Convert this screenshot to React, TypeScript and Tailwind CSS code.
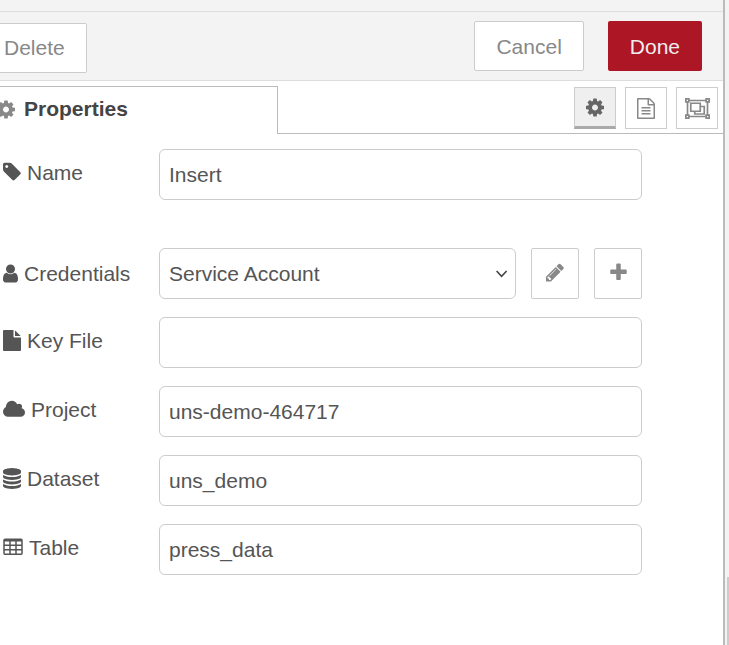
import type { ReactNode } from "react";

type IconProps = { className?: string };

const COG =
  "M1152 896q0-106-75-181t-181-75-181 75-75 181 75 181 181 75 181-75 75-181zm512-109v222q0 12-8 23t-20 13l-185 28q-19 54-39 91 35 50 107 138 10 12 10 25t-9 23q-27 37-99 108t-94 71q-12 0-26-9l-138-108q-44 23-91 38-16 136-29 186-7 28-36 28h-222q-14 0-24.5-8.5t-11.5-21.5l-28-184q-49-16-90-37l-141 107q-10 9-25 9-14 0-25-11-126-114-165-168-7-10-7-23 0-12 8-23 15-21 51-66.5t54-70.5q-27-50-41-99l-183-27q-13-2-21-12.5t-8-23.5v-222q0-12 8-23t19-13l186-28q14-46 39-92-40-57-107-138-10-12-10-24 0-10 9-23 26-36 98.5-107.5t94.5-71.5q13 0 26 10l138 107q44-23 91-38 16-136 29-186 7-28 36-28h222q14 0 24.5 8.5t11.5 21.5l28 184q49 16 90 37l142-107q9-9 24-9 13 0 25 10 129 119 165 170 7 8 7 22 0 12-8 23-15 21-51 66.5t-54 70.5q26 50 41 98l183 28q13 2 21 12.5t8 23.5z";
const TAG =
  "M576 448q0-53-37.5-90.5t-90.5-37.5-90.5 37.5-37.5 90.5 37.5 90.5 90.5 37.5 90.5-37.5 37.5-90.5zm1067 576q0 53-37 90l-491 492q-39 37-91 37-53 0-90-37l-715-716q-38-37-64.5-101t-26.5-117v-416q0-52 38-90t90-38h416q53 0 117 26.5t102 64.5l715 714q37 39 37 91z";
const USER =
  "M1536 1399q0 109-62.5 187t-150.5 78h-854q-88 0-150.5-78t-62.5-187q0-85 8.5-160.5t31.5-152 58.5-131 94-89 134.5-34.5q131 128 313 128t313-128q76 0 134.5 34.5t94 89 58.5 131 31.5 152 8.5 160.5zm-256-887q0 159-112.5 271.5t-271.5 112.5-271.5-112.5-112.5-271.5 112.5-271.5 271.5-112.5 271.5 112.5 112.5 271.5z";
const FILE =
  "M1152 512v-472q22 14 36 28l408 408q14 14 28 36h-472zm-128 32q0 40 28 68t68 28h544v1056q0 40-28 68t-68 28h-1344q-40 0-68-28t-28-68v-1600q0-40 28-68t68-28h800v544z";
const CLOUD =
  "M1984 1152q0 159-112.5 271.5t-271.5 112.5h-1088q-185 0-316.5-131.5t-131.5-316.5q0-132 71-241.5t187-163.5q-2-28-2-43 0-212 150-362t362-150q158 0 286.5 88t187.5 230q70-62 166-62 106 0 181 75t75 181q0 75-41 138 129 30 213 134.5t84 239.5z";
const DATABASE =
  "M896 768q237 0 443-43t325-127v170q0 69-103 128t-280 93.5-385 34.5-385-34.5-280-93.5-103-128v-170q119 84 325 127t443 43zm0 768q237 0 443-43t325-127v170q0 69-103 128t-280 93.5-385 34.5-385-34.5-280-93.5-103-128v-170q119 84 325 127t443 43zm0-384q237 0 443-43t325-127v170q0 69-103 128t-280 93.5-385 34.5-385-34.5-280-93.5-103-128v-170q119 84 325 127t443 43zm0-1152q208 0 385 34.5t280 93.5 103 128v128q0 69-103 128t-280 93.5-385 34.5-385-34.5-280-93.5-103-128v-128q0-69 103-128t280-93.5 385-34.5z";
const TABLE =
  "M64 288q0-66 47-113t113-47h1344q66 0 113 47t47 113v1088q0 66-47 113t-113 47h-1344q-66 0-113-47t-47-113zM192 384v256h384v-256zM704 384v256h384v-256zM1216 384v256h384v-256zM192 768v256h384v-256zM704 768v256h384v-256zM1216 768v256h384v-256zM192 1152v256h384v-256zM704 1152v256h384v-256zM1216 1152v256h384v-256z";
const PENCIL =
  "M491 1536l91-91-235-235-91 91v107h128v128h107zm523-928q0-22-22-22-10 0-17 7l-542 542q-7 7-7 17 0 22 22 22 10 0 17-7l542-542q7-7 7-17zm-54-192l416 416-832 832h-416v-416zm683 96q0 53-37 90l-166 166-416-416 166-165q36-38 90-38 53 0 91 38l235 234q37 39 37 91z";
const PLUS =
  "M1600 736v192q0 40-28 68t-68 28h-416v416q0 40-28 68t-68 28h-192q-40 0-68-28t-28-68v-416h-416q-40 0-68-28t-28-68v-192q0-40 28-68t68-28h416v-416q0-40 28-68t68-28h192q40 0 68 28t28 68v416h416q40 0 68 28t28 68z";
const FILE_TEXT =
  "M1596 380q28 28 48 76t20 88v1152q0 40-28 68t-68 28h-1344q-40 0-68-28t-28-68v-1600q0-40 28-68t68-28h896q40 0 88 20t76 48zm-444-244v376h376q-10-29-22-41l-313-313q-12-12-41-22zm384 1528v-1024h-416q-40 0-68-28t-28-68v-416h-768v1536h1280zm-1024-864q0-14 9-23t23-9h704q14 0 23 9t9 23v64q0 14-9 23t-23 9h-704q-14 0-23-9t-9-23v-64zm736 224q14 0 23 9t9 23v64q0 14-9 23t-23 9h-704q-14 0-23-9t-9-23v-64q0-14 9-23t23-9h704zm0 256q14 0 23 9t9 23v64q0 14-9 23t-23 9h-704q-14 0-23-9t-9-23v-64q0-14 9-23t23-9h704z";

function Glyph({ d, box, className }: { d: string; box: string; className: string }) {
  return (
    <svg viewBox={box} className={`shrink-0 ${className}`} fill="currentColor" fillRule="evenodd" aria-hidden="true">
      <path d={d} />
    </svg>
  );
}

function ObjectGroup({ className = "" }: IconProps) {
  return (
    <svg viewBox="0 0 25 21" className={className} fill="none" stroke="currentColor" strokeWidth="1.7" aria-hidden="true">
      <path d="M4 2.5h17M4 18.5h17M2.5 4v13M22.500 4v13" />
      <path d="M.85.85h3v3h-3zM21.15.85h3v3h-3zM.85 17.15h3v3h-3zM21.15 17.15h3v3h-3z" />
      <path d="M5.75 5.25h9.500v8h-9.500zM15.25 8.500h4v7.500h-9.500v-2.750" />
    </svg>
  );
}

const fieldBox =
  "h-[51px] w-full min-w-0 rounded-md border border-[#ccc] bg-white px-[9px] text-[#555] outline-none focus:border-[#999]";

function Row({
  id,
  label,
  icon,
  labelClass = "pb-1",
  children,
}: {
  id: string;
  label: string;
  icon: ReactNode;
  labelClass?: string;
  children: ReactNode;
}) {
  return (
    <div className="flex items-center">
      <label htmlFor={id} className={`flex w-39 shrink-0 items-center gap-1.5 ${labelClass}`}>
        {icon}
        {label}
      </label>
      <div className="flex min-w-0 flex-1 gap-[15px]">{children}</div>
    </div>
  );
}

function TextRow({ id, label, icon, value }: { id: string; label: string; icon: ReactNode; value: string }) {
  return (
    <Row id={id} label={label} icon={icon}>
      <input id={id} type="text" defaultValue={value} className={fieldBox} />
    </Row>
  );
}

const toolButton = "flex size-[42px] items-center justify-center border border-[#ccc] bg-white text-[#888]";
const squareButton =
  "flex h-[51px] w-12 shrink-0 items-center justify-center rounded-xs border border-[#ccc] bg-white pb-0.5 text-[#888]";

export default function App() {
  return (
    <div className="flex min-h-screen bg-[#f3f3f3] font-['Liberation_Sans',Arial,sans-serif] text-[21px] leading-6 text-[#555]">
      <main className="min-w-0 flex-1 border-r-2 border-[#bbb] bg-white">
        <div className="h-3 border-b border-[#ddd] bg-[#f3f3f3]" />
        <header className="flex h-[69px] items-start border-b border-[#ddd] bg-[#f3f3f3] pt-[9px] pr-[21px] text-[#888]">
          <button type="button" className="mt-0.5 h-[50px] rounded-r-xs border border-l-0 border-[#ccc] bg-white pr-[21px] pl-1">
            Delete
          </button>
          <div className="ml-auto flex gap-6">
            <button type="button" className="h-[50px] rounded-xs border border-[#ccc] bg-white px-[21px] pt-0.5">
              Cancel
            </button>
            <button type="button" className="h-[50px] rounded-xs bg-[#ad1625] px-[22px] pt-0.5 text-[#eee]">
              Done
            </button>
          </div>
        </header>

        <div className="flex pt-[5px]">
          <div className="w-[278px] overflow-hidden border-t border-r border-[#bbb]">
            <button type="button" className="-ml-[3px] flex h-11 items-center gap-[9px] font-bold text-[#444]">
              <Glyph d={COG} box="128 0 1536 1792" className="h-[21px] w-[18px] text-[#888]" />
              Properties
            </button>
          </div>
          <div className="flex h-12 flex-1 items-start justify-end gap-[9px] border-b border-[#bbb] pt-px pr-[5px]">
            <button
              type="button"
              aria-label="Properties"
              className="flex size-[42px] items-center justify-center border border-b-3 border-[#ccc] border-b-[#aaa] bg-[#efefef] text-[#666]"
            >
              <Glyph d={COG} box="128 0 1536 1792" className="h-[21px] w-[18px]" />
            </button>
            <button type="button" aria-label="Description" className={toolButton}>
              <Glyph d={FILE_TEXT} box="128 0 1536 1792" className="h-[21px] w-[18px]" />
            </button>
            <button type="button" aria-label="Appearance" className={toolButton}>
              <ObjectGroup className="h-[21px] w-[25px]" />
            </button>
          </div>
        </div>

        <form className="flex flex-col gap-[18px] pt-[15px] pr-[81px] pl-[3px]">
          <div className="mb-[30px]">
            <TextRow id="name" label="Name" value="Insert" icon={<Glyph d={TAG} box="128 64 1536 1792" className="h-[21px] w-[18px] overflow-visible" />} />
          </div>
          <Row
            id="credentials"
            label="Credentials"
            labelClass="pb-0"
            icon={<Glyph d={USER} box="256 0 1280 1792" className="h-[21px] w-[15px]" />}
          >
            <div className="relative min-w-0 flex-1">
              <select id="credentials" className={`${fieldBox} appearance-none`}>
                <option>Service Account</option>
              </select>
              <svg
                viewBox="0 0 12 8"
                className="pointer-events-none absolute top-[22px] right-2 h-2 w-3"
                fill="none"
                stroke="#444"
                strokeWidth="1.6"
                aria-hidden="true"
              >
                <path d="M.6 1l5 5.400 5-5.400" />
              </svg>
            </div>
            <button type="button" aria-label="Edit credentials" className={squareButton}>
              <Glyph d={PENCIL} box="128 0 1536 1792" className="h-[21px] w-[18px]" />
            </button>
            <button type="button" aria-label="Add credentials" className={squareButton}>
              <Glyph d={PLUS} box="192 0 1408 1792" className="h-[21px] w-[17px]" />
            </button>
          </Row>
          <TextRow id="keyfile" label="Key File" value="" icon={<Glyph d={FILE} box="128 0 1536 1792" className="h-[21px] w-[18px]" />} />
          <TextRow id="project" label="Project" value="uns-demo-464717" icon={<Glyph d={CLOUD} box="64 0 1920 1792" className="h-[21px] w-[22px]" />} />
          <TextRow id="dataset" label="Dataset" value="uns_demo" icon={<Glyph d={DATABASE} box="128 0 1536 1792" className="h-[21px] w-[18px]" />} />
          <TextRow id="table" label="Table" value="press_data" icon={<Glyph d={TABLE} box="64 0 1664 1792" className="h-[21px] w-5" />} />
        </form>
      </main>
      <aside className="flex w-1 flex-col items-end">
        <div className="h-[577px]" />
        <div className="w-0.5 flex-1 bg-[#ccc]" />
      </aside>
    </div>
  );
}
